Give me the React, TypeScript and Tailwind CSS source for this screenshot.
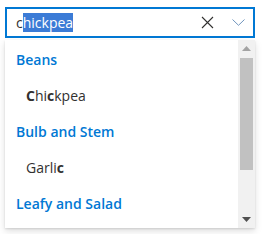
import React from "react";

type Row = { kind: "header"; text: string } | { kind: "item"; parts: { t: string; b?: boolean }[] };

const rows: Row[] = [
  { kind: "header", text: "Beans" },
  { kind: "item", parts: [{ t: "C", b: true }, { t: "hi" }, { t: "c", b: true }, { t: "kpea" }] },
  { kind: "header", text: "Bulb and Stem" },
  { kind: "item", parts: [{ t: "Garli" }, { t: "c", b: true }] },
  { kind: "header", text: "Leafy and Salad" },
];

export default function App() {
  return (
    <div
      className="w-[277px] h-[234px] bg-white overflow-hidden pt-[7px] pl-[5px]"
      style={{ fontFamily: "'Open Sans', 'Noto Sans', sans-serif" }}
    >
      {/* input */}
      <div className="w-[250px] h-[31px] border-2 border-[#0078d4] flex items-center">
        <div className="flex-1 pl-[9px] text-[14px] text-[#323130] leading-[19px] flex">
          <span>c</span>
          <span className="bg-[#3b7bd6] text-white">hickpea</span>
        </div>
        <div className="w-[32px] h-full flex items-center justify-center">
          <svg width="13" height="13" viewBox="0 0 13 13">
            <path d="M1 1L12 12M12 1L1 12" stroke="#323130" strokeWidth="1.1" fill="none" />
          </svg>
        </div>
        <div className="w-[30px] h-full flex items-center justify-center">
          <svg width="13" height="7" viewBox="0 0 13 7">
            <path d="M0.5 0.5L6.5 6.3L12.5 0.5" stroke="#6f94bd" strokeWidth="1" fill="none" />
          </svg>
        </div>
      </div>

      {/* dropdown */}
      <div className="mt-[2px] w-[250px] h-[188px] bg-white flex shadow-[0_3.2px_7.2px_0_rgba(0,0,0,0.132),0_0.6px_1.8px_0_rgba(0,0,0,0.108)]">
        <div className="flex-1 pt-[1px]">
          {rows.map((r, i) =>
            r.kind === "header" ? (
              <div key={i} className="h-[36px] flex items-center pl-[11px] text-[14px] font-semibold text-[#0078d4]">
                {r.text}
              </div>
            ) : (
              <div key={i} className="h-[36px] flex items-center pl-[21px] text-[14px] text-[#323130]">
                {r.parts.map((p, j) => (
                  <span key={j} className={p.b ? "font-bold" : ""}>
                    {p.t}
                  </span>
                ))}
              </div>
            )
          )}
        </div>
        {/* scrollbar */}
        <div className="w-[17px] h-full bg-[#f1f1f1] flex flex-col items-center">
          <div className="h-[17px] flex items-center justify-center">
            <svg width="9" height="5" viewBox="0 0 9 5">
              <path d="M4.5 0L9 5H0Z" fill="#a3a3a3" />
            </svg>
          </div>
          <div className="w-[13px] h-[112px] mt-[1px] bg-[#c1c1c1]" />
          <div className="flex-1" />
          <div className="h-[17px] flex items-center justify-center">
            <svg width="9" height="5" viewBox="0 0 9 5">
              <path d="M0 0H9L4.5 5Z" fill="#505050" />
            </svg>
          </div>
        </div>
      </div>
    </div>
  );
}
